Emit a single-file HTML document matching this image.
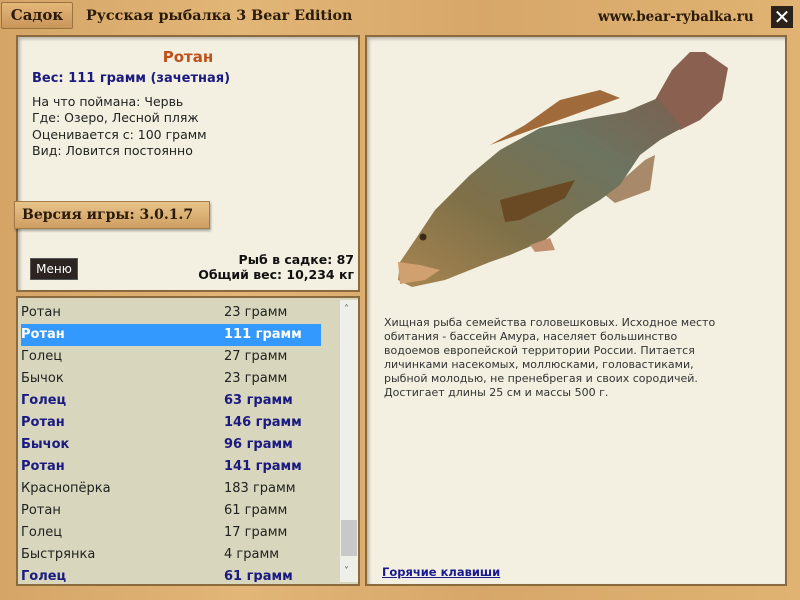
<!DOCTYPE html>
<html><head><meta charset="utf-8"><style>
*{margin:0;padding:0;box-sizing:border-box}
body{width:800px;height:600px;overflow:hidden;position:relative;background:linear-gradient(90deg,#d4a566,#e2b677 30%,#d6a769 60%,#e0b372);font-family:"DejaVu Sans",Verdana,sans-serif}
.abs{position:absolute}
.serif{font-family:"DejaVu Serif","Liberation Serif",serif;color:#2a1a08;font-weight:bold}
.panel{background:#f3f0e1;border:2px solid #8a6a3e;box-shadow:inset 2px 2px 3px rgba(0,0,0,.25)}
.row{position:absolute;left:21px;width:300px;height:22px;font-size:13px;line-height:22px;color:#222}
.row span{position:absolute;left:203px}
.b{color:#1a1a80;font-weight:bold}
</style></head><body>
<div class="abs serif" style="left:1px;top:2px;width:72px;height:27px;background:linear-gradient(#e4b879,#c9955a);border:1px solid #9a7240;border-radius:2px;font-size:15px;line-height:25px;text-align:center">Садок</div>
<div class="abs serif" style="left:86px;top:4px;font-size:14.3px;line-height:24px">Русская рыбалка 3 Bear Edition</div>
<div class="abs serif" style="left:598px;top:5px;font-size:13.5px;line-height:24px">www.bear-rybalka.ru</div>
<div class="abs" style="left:771px;top:6px;width:22px;height:22px;background:#2b231b;color:#fff;font:bold 20px/22px 'DejaVu Sans',sans-serif;text-align:center">✕</div>

<div class="abs panel" style="left:16px;top:35px;width:344px;height:257px"></div>
<div class="abs" style="left:16px;top:48px;width:344px;text-align:center;font-size:15px;font-weight:bold;color:#c0501a">Ротан</div>
<div class="abs b" style="left:32px;top:71px;font-size:13px">Вес: 111 грамм (зачетная)</div>
<div class="abs" style="left:32px;top:94px;font-size:12.5px;line-height:16.3px;color:#222">На что поймана: Червь<br>Где: Озеро, Лесной пляж<br>Оценивается с: 100 грамм<br>Вид: Ловится постоянно</div>
<div class="abs serif" style="left:14px;top:201px;width:196px;height:28px;background:linear-gradient(#e8c48a,#cf9e62);border:1px solid #a47a45;box-shadow:1px 2px 2px rgba(0,0,0,.3);font-size:14px;line-height:26px;padding-left:7px">Версия игры: 3.0.1.7</div>
<div class="abs" style="left:30px;top:258px;width:48px;height:22px;background:#2b2420;border:1px solid #555;color:#fff;font-size:12px;line-height:20px;text-align:center">Меню</div>
<div class="abs" style="left:150px;top:252px;width:204px;text-align:right;font-size:12.5px;font-weight:bold;line-height:15px;color:#111">Рыб в садке: 87<br>Общий вес: 10,234 кг</div>

<div class="abs" style="left:16px;top:296px;width:344px;height:290px;background:#d8d6bd;border:2px solid #8a6a3e;overflow:hidden">
<div class="abs" style="left:322px;top:2px;width:18px;height:282px;background:#efefe9"></div>
<div class="abs" style="left:323px;top:222px;width:16px;height:36px;background:#c8c8c8"></div>
<div class="abs" style="left:326px;top:6px;font-size:10px;color:#555">˄</div>
<div class="abs" style="left:326px;top:268px;font-size:10px;color:#555">˅</div>
</div>
<div class="abs" style="left:21px;top:324px;width:300px;height:22px;background:#3399ff"></div>
<div class="row" style="top:302px">Ротан<span>23 грамм</span></div>
<div class="row" style="top:324px;color:#fff;font-weight:bold">Ротан<span>111 грамм</span></div>
<div class="row" style="top:346px">Голец<span>27 грамм</span></div>
<div class="row" style="top:368px">Бычок<span>23 грамм</span></div>
<div class="row b" style="top:390px">Голец<span>63 грамм</span></div>
<div class="row b" style="top:412px">Ротан<span>146 грамм</span></div>
<div class="row b" style="top:434px">Бычок<span>96 грамм</span></div>
<div class="row b" style="top:456px">Ротан<span>141 грамм</span></div>
<div class="row" style="top:478px">Краснопёрка<span>183 грамм</span></div>
<div class="row" style="top:500px">Ротан<span>61 грамм</span></div>
<div class="row" style="top:522px">Голец<span>17 грамм</span></div>
<div class="row" style="top:544px">Быстрянка<span>4 грамм</span></div>
<div class="row b" style="top:566px;height:16px;overflow:hidden;line-height:22px">Голец<span>61 грамм</span></div>

<div class="abs panel" style="left:365px;top:35px;width:422px;height:551px"></div>
<svg class="abs" style="left:370px;top:40px" width="400" height="260" viewBox="370 40 400 260">
<defs><linearGradient id="g" x1="0" y1="1" x2="1" y2="0"><stop offset="0" stop-color="#a88650"/><stop offset=".35" stop-color="#7f7048"/><stop offset=".7" stop-color="#6c7460"/><stop offset="1" stop-color="#7a6050"/></linearGradient></defs>
<path d="M620 98 L600 90 L560 100 L525 125 L490 145 Z" fill="#a06a3a"/>
<path d="M645 160 L655 155 L650 190 L615 203 L605 195 Z" fill="#a88a6a"/>
<path d="M655 100 L672 70 L690 52 L705 52 L728 68 L722 100 L700 120 L680 130 Z" fill="#8a6050"/>
<path d="M500 150 L540 128 L590 118 L625 112 L658 98 L682 128 L660 140 L640 155 L620 185 L600 200 L575 215 L545 240 L510 255 L490 262 L445 280 L412 287 L398 280 L400 262 L415 240 L435 210 L470 175 Z" fill="url(#g)"/>
<path d="M500 200 L575 180 L565 198 L520 220 L505 222 Z" fill="#6a4a25"/>
<path d="M530 245 L550 238 L555 250 L535 252 Z" fill="#c09070"/>
<path d="M398 262 L420 265 L440 270 L425 280 L400 284 Z" fill="#d0a070"/>
<circle cx="423" cy="237" r="3.5" fill="#3a2a1a"/>
</svg>
<div class="abs" style="left:384px;top:316px;width:345px;font-size:11px;line-height:14px;color:#333">Хищная рыба семейства головешковых. Исходное место обитания - бассейн Амура, населяет большинство водоемов европейской территории России. Питается личинками насекомых, моллюсками, головастиками, рыбной молодью, не пренебрегая и своих сородичей. Достигает длины 25 см и массы 500 г.</div>
<div class="abs" style="left:382px;top:565px;font-size:11.5px;font-weight:bold;color:#1a1a90;text-decoration:underline">Горячие клавиши</div>
</body></html>
